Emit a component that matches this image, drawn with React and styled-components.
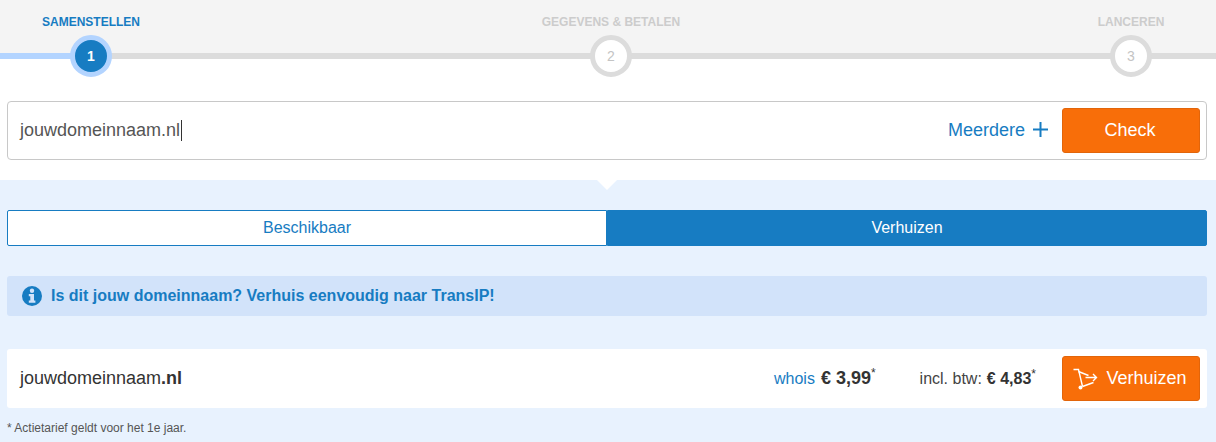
import styled, { createGlobalStyle } from "styled-components";

const GlobalStyle = createGlobalStyle`
    html, body {
        margin: 0;
        padding: 0;
        background: #fff;
        font-family: "Liberation Sans", Arial, sans-serif;
        color: #333;
    }
`;

const Page = styled.div`
    width: 1216px;
    height: 442px;
    overflow: hidden;
`;

const Stepper = styled.div`
    height: 59px;
    box-sizing: border-box;
    padding-left: 1px;
    display: flex;
    gap: 340px;
    background:
        linear-gradient(#b3d4ff, #b3d4ff) left 53px / 90px 6px no-repeat,
        linear-gradient(#dcdcdc, #dcdcdc) left 53px / 100% 6px no-repeat,
        #f4f4f4;
`;

const Step = styled.div`
    flex: 0 0 180px;
    display: flex;
    flex-direction: column;
    align-items: center;
`;

const StepLabel = styled.div`
    margin-top: 15px;
    height: 14px;
    line-height: 14px;
    font-size: 12px;
    font-weight: bold;
    white-space: nowrap;
    color: ${(p) => (p.$active ? "#177cc2" : "#cccccc")};
`;

const StepCircle = styled.div`
    margin-top: 6px;
    width: 42px;
    height: 42px;
    flex: none;
    box-sizing: border-box;
    border-radius: 50%;
    border: 5px solid ${(p) => (p.$active ? "#b3d4ff" : "#dcdcdc")};
    background: ${(p) => (p.$active ? "#177cc2" : "#fff")};
    color: ${(p) => (p.$active ? "#fff" : "#c4c4c4")};
    font-size: 14px;
    font-weight: ${(p) => (p.$active ? "bold" : "normal")};
    display: flex;
    align-items: center;
    justify-content: center;
`;

const SearchWrap = styled.div`
    height: 121px;
    box-sizing: border-box;
    padding: 42px 9px 0 7px;
`;

const SearchBox = styled.div`
    height: 59px;
    box-sizing: border-box;
    border: 1px solid #c8c8c8;
    border-radius: 4px;
    padding: 6px 6px 6px 12px;
    display: flex;
    align-items: center;
`;

const DomainInput = styled.div`
    flex: 1;
    font-size: 18px;
    color: #555;
    display: flex;
    align-items: center;
`;

const Caret = styled.span`
    width: 1px;
    height: 21px;
    margin-left: 1px;
    background: #333;
`;

const MoreLink = styled.a`
    display: flex;
    align-items: center;
    gap: 8px;
    margin-right: 14px;
    font-size: 18px;
    color: #177cc2;

    svg {
        margin-top: -2px;
    }
`;

const OrangeButton = styled.button`
    width: 138px;
    height: 45px;
    box-sizing: border-box;
    border: 1px solid #e2650a;
    border-radius: 3px;
    background: #f86e09;
    color: #fff;
    font-family: inherit;
    font-size: 18px;
    padding: 0 2px 0 0;
    display: flex;
    align-items: center;
    justify-content: center;
    gap: 6px;
`;

const Section = styled.div`
    position: relative;
    height: 262px;
    box-sizing: border-box;
    padding: 30px 9px 0 7px;
    background: #e8f2fe;
`;

const Notch = styled.div`
    position: absolute;
    top: 0;
    left: 597px;
    width: 0;
    height: 0;
    border-left: 10px solid transparent;
    border-right: 10px solid transparent;
    border-top: 10px solid #fff;
`;

const Toggle = styled.div`
    height: 36px;
    display: grid;
    grid-template-columns: 600px 600px;
`;

const ToggleItem = styled.div`
    box-sizing: border-box;
    border: 1px solid #177cc2;
    border-radius: ${(p) => (p.$active ? "0 2px 2px 0" : "2px 0 0 2px")};
    background: ${(p) => (p.$active ? "#177cc2" : "#fff")};
    color: ${(p) => (p.$active ? "#fff" : "#177cc2")};
    font-size: 16px;
    display: flex;
    align-items: center;
    justify-content: center;
`;

const InfoBar = styled.div`
    margin-top: 30px;
    height: 40px;
    box-sizing: border-box;
    padding-left: 15px;
    border-radius: 3px;
    background: #d2e3fa;
    color: #177cc2;
    font-size: 16px;
    font-weight: bold;
    display: flex;
    align-items: center;
    gap: 9px;
`;

const DomainRow = styled.div`
    margin-top: 33px;
    height: 59px;
    box-sizing: border-box;
    padding: 0 7px 0 13px;
    border-radius: 3px;
    background: #fff;
    display: flex;
    align-items: center;
`;

const DomainName = styled.div`
    flex: 1;
    font-size: 18px;
    color: #333;

    b {
        font-weight: bold;
    }
`;

const PriceGroup = styled.div`
    display: flex;
    align-items: baseline;
    gap: ${(p) => p.$inner}px;
    font-size: 16px;
    color: ${(p) => (p.$link ? "#177cc2" : "#444")};
    margin-right: ${(p) => p.$gap}px;
`;

const Price = styled.span`
    font-weight: bold;
    font-size: ${(p) => p.$size}px;
    color: #333;

    sup {
        font-size: 12px;
        font-weight: normal;
        line-height: 0;
    }
`;

const Footnote = styled.div`
    margin-top: 13px;
    font-size: 12px;
    line-height: 14px;
    color: #555;
`;

const CartIcon = () => (
    <svg width="27" height="24" viewBox="0 0 27 24" fill="none" stroke="#fff" strokeWidth="1.4">
        <path d="M0.5 2.5h5L9.5 19.5" />
        <path d="M5.5 4.5 15.5 8.5" />
        <path d="M9.5 19.5 20.5 15.5" />
        <path d="M12.5 10.5h11M20 7l3.5 3.5L20 14" />
        <circle cx="7.5" cy="20.5" r="2" fill="#fff" stroke="none" />
    </svg>
);

const InfoIcon = () => (
    <svg width="20" height="20" viewBox="0 0 20 20">
        <circle cx="10" cy="10" r="10" fill="#177cc2" />
        <circle cx="10" cy="4.8" r="2.2" fill="#d2e3fa" />
        <path d="M6.8 8h5.2v6.6h1.4v2.2H6.8v-2.2h1.5v-4.4H6.8z" fill="#d2e3fa" />
    </svg>
);

const PlusIcon = () => (
    <svg width="15" height="15" viewBox="0 0 15 15" stroke="#177cc2" strokeWidth="2">
        <path d="M7.5 0v15M0 7.5h15" />
    </svg>
);

const steps = [
    { label: "Samenstellen", active: true },
    { label: "Gegevens & betalen" },
    { label: "Lanceren" },
];

const App = () => {
    return (
        <Page>
            <GlobalStyle />
            <Stepper>
                {steps.map((step, index) => (
                    <Step key={step.label}>
                        <StepLabel $active={step.active}>{step.label.toUpperCase()}</StepLabel>
                        <StepCircle $active={step.active}>{index + 1}</StepCircle>
                    </Step>
                ))}
            </Stepper>
            <SearchWrap>
                <SearchBox>
                    <DomainInput>
                        jouwdomeinnaam.nl
                        <Caret />
                    </DomainInput>
                    <MoreLink>
                        Meerdere <PlusIcon />
                    </MoreLink>
                    <OrangeButton>Check</OrangeButton>
                </SearchBox>
            </SearchWrap>
            <Section>
                <Notch />
                <Toggle>
                    <ToggleItem>Beschikbaar</ToggleItem>
                    <ToggleItem $active>Verhuizen</ToggleItem>
                </Toggle>
                <InfoBar>
                    <InfoIcon />
                    Is dit jouw domeinnaam? Verhuis eenvoudig naar TransIP!
                </InfoBar>
                <DomainRow>
                    <DomainName>
                        jouwdomeinnaam<b>.nl</b>
                    </DomainName>
                    <PriceGroup $link $inner={6} $gap={44}>
                        whois
                        <Price $size={18}>
                            € 3,99<sup>*</sup>
                        </Price>
                    </PriceGroup>
                    <PriceGroup $inner={5} $gap={26}>
                        incl. btw:
                        <Price $size={16}>
                            € 4,83<sup>*</sup>
                        </Price>
                    </PriceGroup>
                    <OrangeButton>
                        <CartIcon />
                        Verhuizen
                    </OrangeButton>
                </DomainRow>
                <Footnote>* Actietarief geldt voor het 1e jaar.</Footnote>
            </Section>
        </Page>
    );
};

export default App;
